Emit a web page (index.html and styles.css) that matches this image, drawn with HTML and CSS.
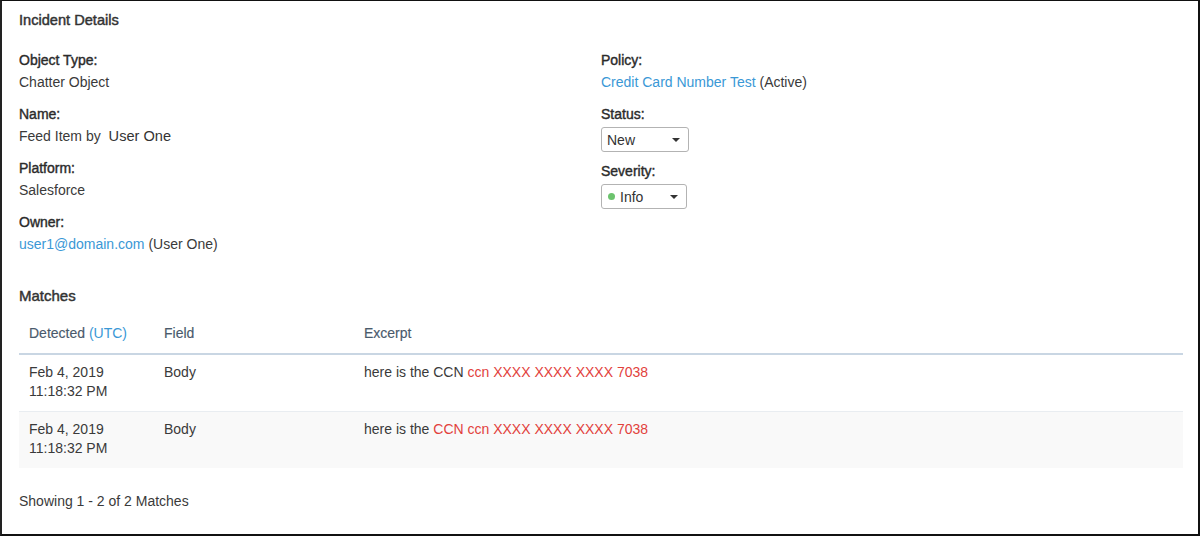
FILE: index.html
```html
<!DOCTYPE html>
<html>
<head>
<meta charset="utf-8">
<link rel="stylesheet" href="styles.css">
</head>
<body>
<div class="panel">
  <h2 class="title">Incident Details</h2>
  <div class="details">
    <div class="col">
      <div class="field">
        <div class="label">Object Type:</div>
        <div class="value">Chatter Object</div>
      </div>
      <div class="field">
        <div class="label">Name:</div>
        <div class="value">Feed Item by <span class="user">User One</span></div>
      </div>
      <div class="field">
        <div class="label">Platform:</div>
        <div class="value">Salesforce</div>
      </div>
      <div class="field field-tight">
        <div class="label">Owner:</div>
        <div class="value"><a class="link" href="#">user1@domain.com</a> (User One)</div>
      </div>
    </div>
    <div class="col">
      <div class="field">
        <div class="label">Policy:</div>
        <div class="value"><a class="link" href="#">Credit Card Number Test</a> (Active)</div>
      </div>
      <div class="field">
        <div class="label label-select">Status:</div>
        <div class="select select-status"><span class="select-text">New</span><span class="caret"></span></div>
      </div>
      <div class="field">
        <div class="label label-select">Severity:</div>
        <div class="select select-severity"><span class="select-text"><span class="dot"></span>Info</span><span class="caret"></span></div>
      </div>
    </div>
  </div>

  <h2 class="title title-matches">Matches</h2>
  <table class="matches">
    <colgroup>
      <col class="c-date">
      <col class="c-field">
      <col>
    </colgroup>
    <thead>
      <tr>
        <th>Detected <span class="utc">(UTC)</span></th>
        <th>Field</th>
        <th>Excerpt</th>
      </tr>
    </thead>
    <tbody>
      <tr>
        <td>Feb 4, 2019<br>11:18:32 PM</td>
        <td>Body</td>
        <td>here is the CCN <span class="hit">ccn XXXX XXXX XXXX 7038</span></td>
      </tr>
      <tr class="alt">
        <td>Feb 4, 2019<br>11:18:32 PM</td>
        <td>Body</td>
        <td>here is the <span class="hit">CCN ccn XXXX XXXX XXXX 7038</span></td>
      </tr>
    </tbody>
  </table>
  <div class="footer">Showing 1 - 2 of 2 Matches</div>
</div>
</body>
</html>
```

FILE: styles.css
```css
* { box-sizing: border-box; }
html, body { margin: 0; padding: 0; background: #fff; }
body {
  font-family: "Liberation Sans", Arial, sans-serif;
  font-size: 14px;
  color: #333;
}
.panel {
  width: 1200px;
  height: 536px;
  border-top: 1px solid #111;
  border-left: 2px solid #222;
  border-right: 2px solid #111;
  border-bottom: 2px solid #111;
  padding: 9px 15px 0 17px;
}
.title {
  margin: 0;
  font-size: 14.6px;
  font-weight: normal;
  line-height: 20px;
  color: #333;
  -webkit-text-stroke: 0.45px #333;
}
.details {
  display: grid;
  grid-template-columns: 1fr 1fr;
  margin-top: 20px;
}
.field { margin-bottom: 12px; }
.field-tight { margin-bottom: 0; }
.label {
  line-height: 20px;
  color: #2b2b2b;
  -webkit-text-stroke: 0.4px #2b2b2b;
  margin-bottom: 2px;
}
.label-select { margin-bottom: 3px; }
.value {
  line-height: 20px;
  color: #3a3a3a;
}
.user {
  font-size: 14.6px;
  margin-left: 4px;
  color: #333;
}
.link {
  color: #3a98d6;
  text-decoration: none;
}
.select {
  display: flex;
  align-items: center;
  justify-content: space-between;
  height: 25px;
  border: 1px solid #b3b3b3;
  border-radius: 3px;
  padding: 0 8px 0 5px;
  background: #fff;
  color: #333;
}
.select-status { width: 88px; margin-bottom: -3px; }
.select-severity { width: 86px; }
.select-text { display: flex; align-items: center; }
.dot {
  width: 7px;
  height: 7px;
  border-radius: 50%;
  background: #6cc36e;
  margin: 0 5px 0 1px;
}
.caret {
  width: 0;
  height: 0;
  border-left: 4.5px solid transparent;
  border-right: 4.5px solid transparent;
  border-top: 4.5px solid #333;
}
.title-matches { margin-top: 32px; font-size: 15px; }
.matches {
  width: 100%;
  table-layout: fixed;
  border-collapse: collapse;
  margin-top: 7px;
}
.matches col.c-date { width: 135px; }
.matches col.c-field { width: 200px; }
.matches th {
  text-align: left;
  font-weight: normal;
  color: #4a5a6c;
  -webkit-text-stroke: 0.15px #4a5a6c;
  line-height: 20px;
  padding: 10px 10px 10px;
  border-bottom: 2px solid #c9d6e3;
}
.utc { color: #3a98d6; -webkit-text-stroke: 0; }
.matches td {
  vertical-align: top;
  line-height: 19px;
  padding: 8px 10px 10px;
  border-bottom: 1px solid #e9edf1;
  color: #3a3a3a;
}
.matches tr.alt td { background: #f9f9f9; border-bottom: none; }
.hit { color: #e2413c; }
.footer {
  margin-top: 23px;
  line-height: 20px;
  color: #3a3a3a;
}
```
